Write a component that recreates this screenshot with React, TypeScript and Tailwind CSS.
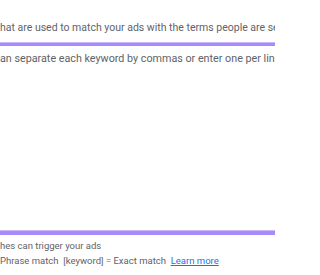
export default function App() {
  return (
    <div className="w-[275px] h-[275px] overflow-hidden bg-white font-['Roboto',sans-serif] text-[#5f6368]">
      <div className="flex flex-col whitespace-nowrap">
        <p className="mt-[20px] text-[10.5px] leading-[16px]">hat are used to match your ads with the terms people are searching for</p>
        <div className="mt-[6px] h-[4px] bg-[#a78bfa] border-t border-[#cbb8fc]"></div>
        <p className="mt-[5px] text-[10.75px] leading-[16px]">an separate each keyword by commas or enter one per line.</p>
        <div className="h-[163px]"></div>
        <div className="h-[5px] bg-[#a78bfa] border-t border-[#cbb8fc]"></div>
        <p className="mt-[4px] text-[9.5px] leading-[13px]">hes can trigger your ads</p>
        <p className="mt-[2px] text-[9.5px] leading-[13px]">
          Phrase match&nbsp;&nbsp;[keyword] = Exact match&nbsp;&nbsp;
          <a className="text-[#1a73e8] underline">Learn more</a>
        </p>
      </div>
    </div>
  );
}
